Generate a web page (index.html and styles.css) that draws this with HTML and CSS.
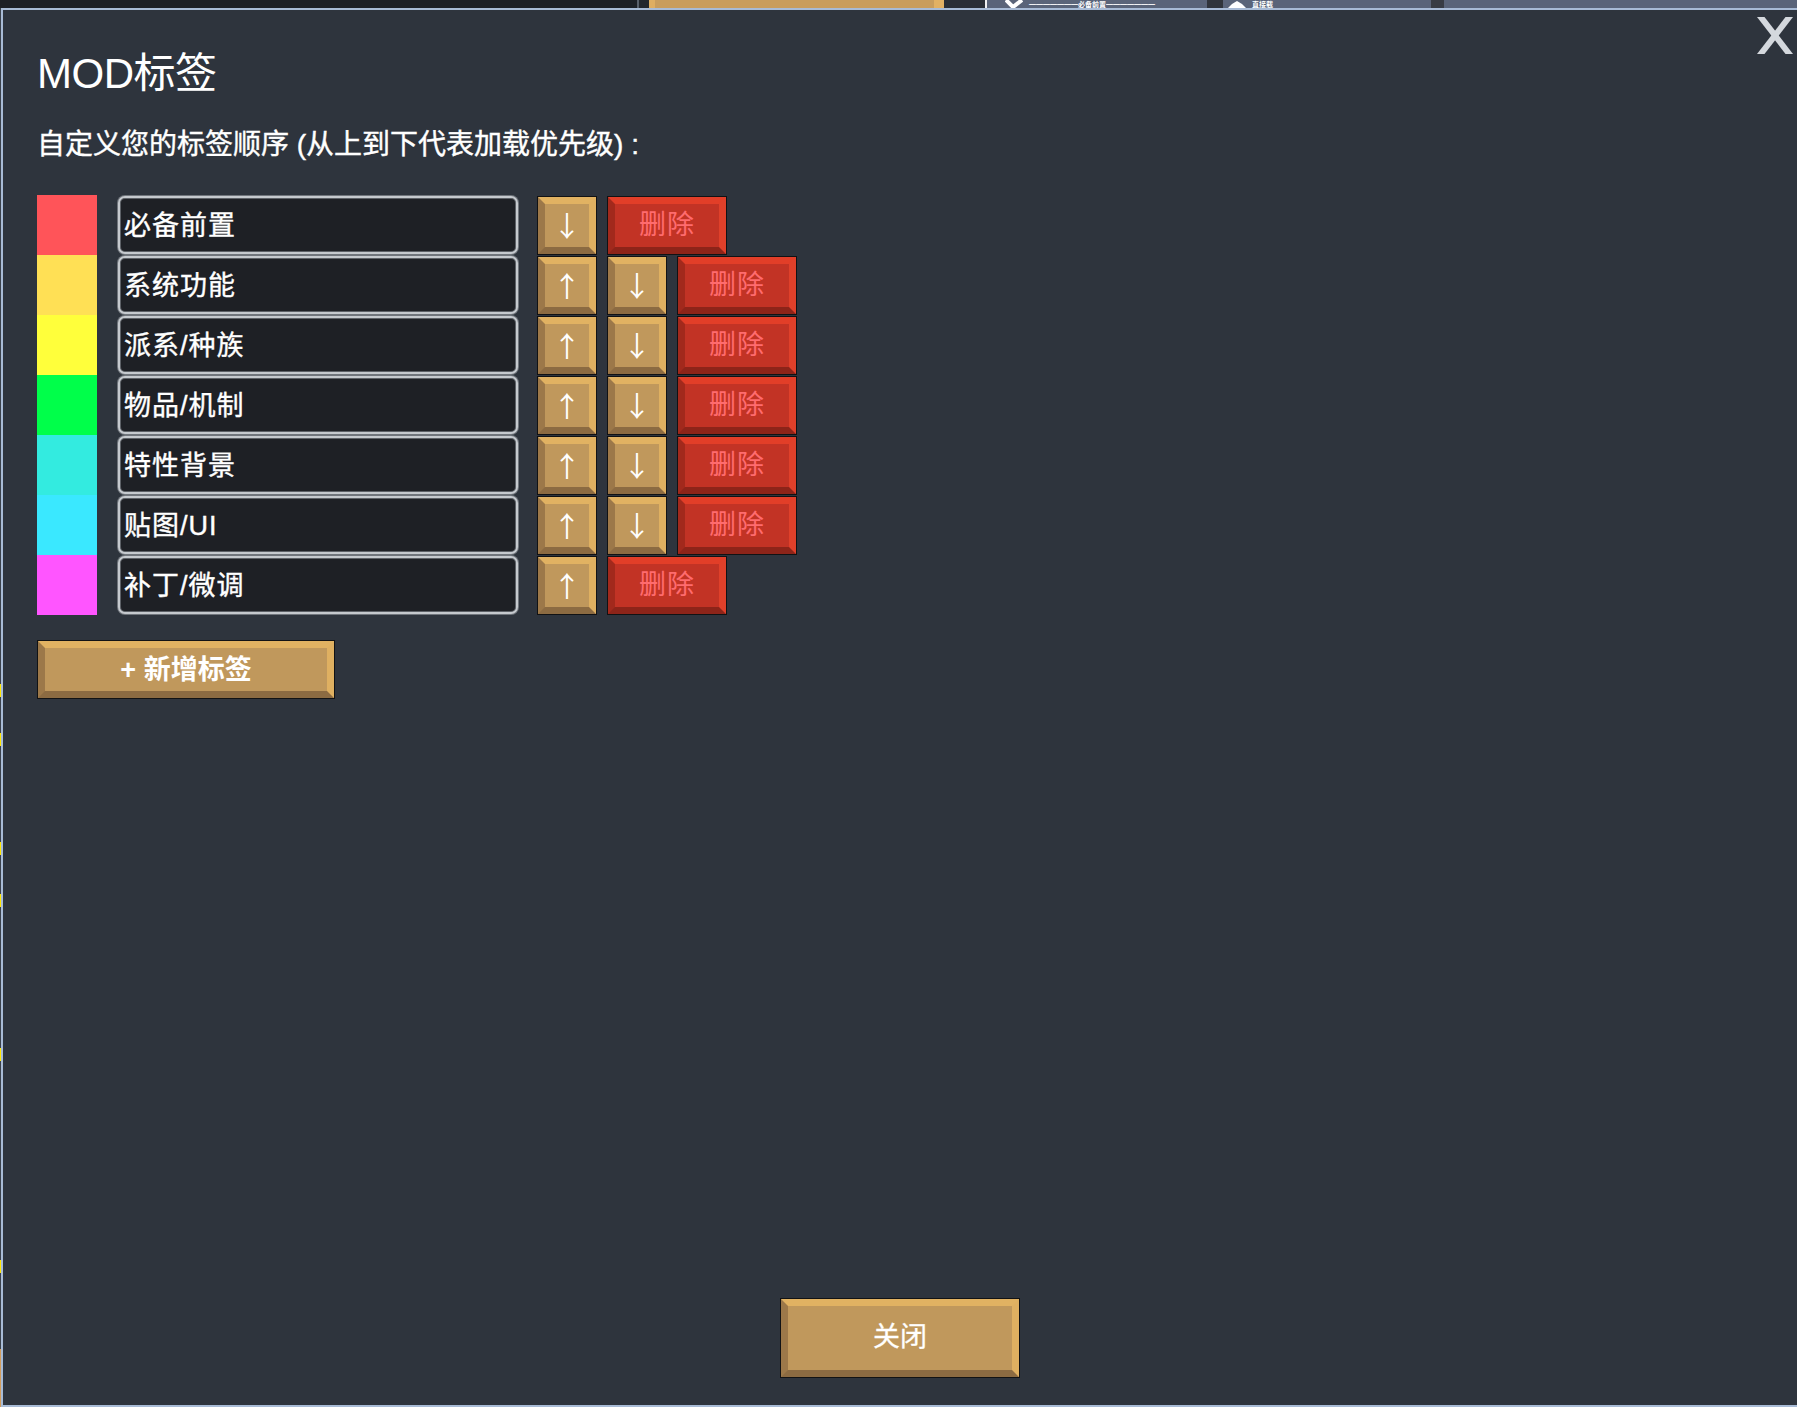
FILE: index.html
```html
<!DOCTYPE html>
<html lang="zh-CN">
<head>
<meta charset="utf-8">
<title>MOD标签</title>
<link rel="stylesheet" href="styles.css">
</head>
<body>
<div class="page">
  <div class="behind-top">
    <div class="bt-dark bt-d1"></div>
    <div class="bt-line"></div>
    <div class="bt-dark bt-d2"></div>
    <div class="bt-gold"></div>
    <div class="bt-dark bt-d3"></div>
    <div class="bt-panel bt-p1">
      <svg class="bt-icon" width="18" height="8" viewBox="0 0 18 8"><path d="M1 0 L8 7 L17 0" fill="none" stroke="#fff" stroke-width="4"/></svg>
      <span class="bt-text">━━━━━━━必备前置━━━━━━━</span>
    </div>
    <div class="bt-dark bt-d4"></div>
    <div class="bt-panel bt-p2">
      <svg class="bt-icon" width="18" height="7" viewBox="0 0 18 7"><path d="M0 7 L4 3 L9 0 L14 3 L18 7 Z" fill="#fff"/></svg>
      <span class="bt-text">直接载</span>
    </div>
    <div class="bt-dark bt-d5"></div>
    <div class="bt-panel bt-p3"></div>
  </div>
  <div class="main">
    <div class="left-edge"></div>
    <div class="modal">
      <button class="close-x" aria-label="关闭">
        <svg width="36" height="37" viewBox="0 0 36 37"><polygon points="0,0 7.5,0 36,37 28.5,37" fill="#d4d8dd"/><polygon points="28.5,0 36,0 7.5,37 0,37" fill="#d4d8dd"/></svg>
      </button>
      <h1 class="title">MOD标签</h1>
      <p class="subtitle">自定义您的标签顺序 (从上到下代表加载优先级) :</p>
      <div class="tag-list">
        <div class="tag-row">
          <div class="swatch c1"></div>
          <div class="tag-name">必备前置</div>
          <div class="tag-actions">
            <button class="btn btn-gold btn-arrow">↓</button>
            <button class="btn btn-red btn-del">删除</button>
          </div>
        </div>
        <div class="tag-row">
          <div class="swatch c2"></div>
          <div class="tag-name">系统功能</div>
          <div class="tag-actions">
            <button class="btn btn-gold btn-arrow">↑</button>
            <button class="btn btn-gold btn-arrow">↓</button>
            <button class="btn btn-red btn-del">删除</button>
          </div>
        </div>
        <div class="tag-row">
          <div class="swatch c3"></div>
          <div class="tag-name">派系/种族</div>
          <div class="tag-actions">
            <button class="btn btn-gold btn-arrow">↑</button>
            <button class="btn btn-gold btn-arrow">↓</button>
            <button class="btn btn-red btn-del">删除</button>
          </div>
        </div>
        <div class="tag-row">
          <div class="swatch c4"></div>
          <div class="tag-name">物品/机制</div>
          <div class="tag-actions">
            <button class="btn btn-gold btn-arrow">↑</button>
            <button class="btn btn-gold btn-arrow">↓</button>
            <button class="btn btn-red btn-del">删除</button>
          </div>
        </div>
        <div class="tag-row">
          <div class="swatch c5"></div>
          <div class="tag-name">特性背景</div>
          <div class="tag-actions">
            <button class="btn btn-gold btn-arrow">↑</button>
            <button class="btn btn-gold btn-arrow">↓</button>
            <button class="btn btn-red btn-del">删除</button>
          </div>
        </div>
        <div class="tag-row">
          <div class="swatch c6"></div>
          <div class="tag-name">贴图/UI</div>
          <div class="tag-actions">
            <button class="btn btn-gold btn-arrow">↑</button>
            <button class="btn btn-gold btn-arrow">↓</button>
            <button class="btn btn-red btn-del">删除</button>
          </div>
        </div>
        <div class="tag-row">
          <div class="swatch c7"></div>
          <div class="tag-name">补丁/微调</div>
          <div class="tag-actions">
            <button class="btn btn-gold btn-arrow">↑</button>
            <button class="btn btn-red btn-del">删除</button>
          </div>
        </div>
      </div>
      <button class="btn btn-gold btn-add">+ 新增标签</button>
      <div class="footer">
        <button class="btn btn-gold btn-close">关闭</button>
      </div>
    </div>
  </div>
</div>
</body>
</html>
```
FILE: styles.css
```css
* {
  box-sizing: border-box;
  margin: 0;
  padding: 0;
}

html, body {
  width: 1797px;
  height: 1407px;
  overflow: hidden;
  background: #1d2026;
  font-family: "Liberation Sans", "Noto Sans CJK SC", sans-serif;
  color: #ffffff;
}

.page {
  display: flex;
  flex-direction: column;
  height: 1407px;
}

/* ---------- app behind the dialog (top strip) ---------- */
.behind-top {
  flex: none;
  height: 8px;
  display: flex;
  overflow: hidden;
}

.bt-dark { background: #1d2026; }
.bt-d1 { width: 637px; }
.bt-line { width: 2px; background: #59606b; }
.bt-d2 { width: 10px; background: #23272d; }
.bt-gold {
  width: 295px;
  background: #c99d5c;
  border-left: 6px solid #dfae61;
  border-right: 10px solid #e2b163;
}
.bt-d3 { width: 41px; background: #2a2e35; }
.bt-d4 { width: 16px; background: #30343b; }
.bt-d5 { width: 13px; background: #383c44; }

.bt-panel {
  background: #5a6479;
  display: flex;
  align-items: flex-end;
  gap: 6px;
  overflow: hidden;
}
.bt-p1 { width: 222px; padding-left: 18px; border-left: 2px solid #f0f0f0; }
.bt-p2 { width: 208px; padding-left: 5px; }
.bt-p3 { flex: 1; }

.bt-icon { flex: none; }

.bt-text {
  font-family: "Noto Sans CJK SC", sans-serif;
  font-size: 7px;
  font-weight: 700;
  line-height: 8px;
  white-space: nowrap;
  color: #ffffff;
}

/* ---------- main area ---------- */
.main {
  flex: 1;
  display: flex;
  min-height: 0;
}

.left-edge {
  flex: none;
  width: 1px;
  background: linear-gradient(to bottom,
    #3a414b 0px, #3a414b 676px,
    #ffe600 676px, #ffe600 689px,
    #3a414b 689px, #3a414b 725px,
    #ffe600 725px, #ffe600 738px,
    #3a414b 738px, #3a414b 834px,
    #ffe600 834px, #ffe600 847px,
    #3a414b 847px, #3a414b 886px,
    #ffe600 886px, #ffe600 899px,
    #3a414b 899px, #3a414b 1040px,
    #ffe600 1040px, #ffe600 1053px,
    #3a414b 1053px, #3a414b 1252px,
    #ffe600 1252px, #ffe600 1265px,
    #3a414b 1265px, #3a414b 1341px,
    #d39c5a 1341px, #d39c5a 100%);
}

.modal {
  flex: 1;
  position: relative;
  display: flex;
  flex-direction: column;
  align-items: flex-start;
  background: #2e343d;
  border-top: 2px solid #a8bbd6;
  border-left: 2px solid #a8bbd6;
  border-bottom: 2px solid #a8bbd6;
  padding-left: 34px;
}

.close-x {
  position: absolute;
  top: 7px;
  right: 4px;
  width: 36px;
  height: 37px;
  border: none;
  background: none;
  display: block;
}
.close-x svg { display: block; }

.title {
  margin-top: 40px;
  font-size: 42px;
  line-height: 48px;
  font-weight: 400;
  letter-spacing: -0.5px;
  color: #ffffff;
}

.subtitle {
  margin-top: 29px;
  font-size: 28px;
  line-height: 36px;
  color: #ffffff;
  -webkit-text-stroke: 0.4px #ffffff;
}

/* ---------- tag list ---------- */
.tag-list {
  margin-top: 32px;
  display: flex;
  flex-direction: column;
}

.tag-row {
  height: 60px;
  display: flex;
  align-items: center;
}

.swatch {
  width: 60px;
  height: 60px;
  flex: none;
}
.c1 { background: #ff5459; }
.c2 { background: #ffe055; }
.c3 { background: #ffff3b; }
.c4 { background: #00ff4a; }
.c5 { background: #33ebe0; }
.c6 { background: #3ae8ff; }
.c7 { background: #ff55ff; }

.tag-name {
  margin-left: 21px;
  width: 400px;
  height: 58px;
  flex: none;
  display: flex;
  align-items: center;
  padding-left: 4px;
  padding-bottom: 3px;
  background: #1e2025;
  border: 2px solid #c5c9ce;
  border-radius: 7px;
  box-shadow: inset 0 0 0 1px #5d6167, 0 0 0 1px #70757c;
  font-size: 27px;
  letter-spacing: 1px;
  color: #ffffff;
  white-space: nowrap;
  -webkit-text-stroke: 0.4px #ffffff;
}

.tag-actions {
  margin-left: 20px;
  display: flex;
  gap: 12px;
}

/* ---------- bevel buttons ---------- */
.btn {
  display: flex;
  align-items: center;
  justify-content: center;
  border-style: solid;
  border-width: 7px;
  box-shadow: 0 0 0 1px #111214;
  font-family: "Liberation Sans", "Noto Sans CJK SC", sans-serif;
  color: #ffffff;
  cursor: pointer;
}

.btn-gold {
  background: #c0985c;
  border-color: #e1b262 #dfb061 #8c6b42 #9c7849;
}

.btn-red {
  background: #c23325;
  border-color: #e23e28 #e0402a #8d2419 #a2291c;
  color: #ff6b6e;
}

.btn-arrow {
  width: 58px;
  height: 57px;
  font-family: "Noto Sans CJK SC", sans-serif;
  font-size: 28px;
  line-height: 1;
}

.btn-del {
  width: 118px;
  height: 57px;
  padding-bottom: 5px;
  font-family: "Noto Sans CJK SC", sans-serif;
  font-size: 27px;
  letter-spacing: 1px;
}

.btn-add {
  margin-top: 26px;
  width: 296px;
  height: 57px;
  padding-bottom: 5px;
  font-size: 27px;
  font-weight: 700;
  margin-left: 1px;
}

.footer {
  margin-top: auto;
  margin-bottom: 28px;
  align-self: stretch;
  display: flex;
  justify-content: center;
  padding-right: 34px;
}

.btn-close {
  width: 238px;
  height: 78px;
  padding-bottom: 7px;
  font-size: 27px;
  -webkit-text-stroke: 0.3px #ffffff;
}
```
